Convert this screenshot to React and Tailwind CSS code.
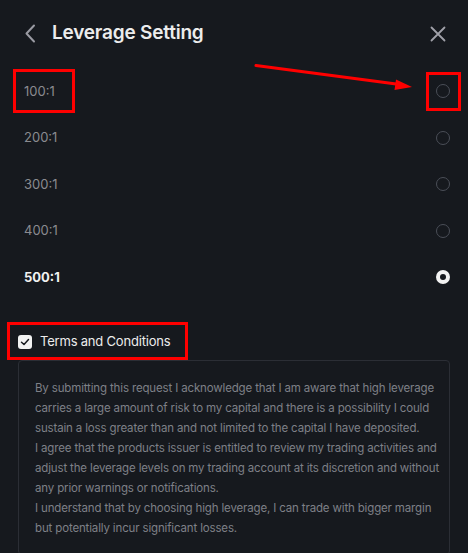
import React, { useState } from "react";

const options = ["100:1", "200:1", "300:1", "400:1", "500:1"];

function Radio({ checked }) {
  if (checked) {
    return (
      <span className="flex h-[14px] w-[14px] items-center justify-center rounded-full bg-[#f2f2f2]">
        <span className="h-[6px] w-[6px] rounded-full bg-[#16191e]"></span>
      </span>
    );
  }
  return <span className="block h-[14px] w-[14px] rounded-full border border-[#4a4e57]"></span>;
}

export default function App() {
  const [selected, setSelected] = useState("500:1");
  const [agreed, setAgreed] = useState(true);

  return (
    <div className="relative h-[553px] w-[468px] overflow-hidden bg-[#16191e] font-['Inter','Noto_Sans',sans-serif]">
      {/* Header */}
      <div className="flex h-[67px] items-center justify-between pl-[24px] pr-[22px]">
        <div className="flex items-center gap-[16px]">
          <svg width="12" height="19" viewBox="0 0 12 19" fill="none">
            <path d="M10 1.5 L2.5 9.5 L10 17.5" stroke="#9a9ba3" strokeWidth="2" strokeLinecap="round" strokeLinejoin="round" />
          </svg>
          <span className="text-[19px] font-semibold tracking-[-0.2px] text-[#ececec]">Leverage Setting</span>
        </div>
        <svg width="16" height="16" viewBox="0 0 16 16" fill="none">
          <path d="M1.5 1.5 L14.5 14.5 M14.5 1.5 L1.5 14.5" stroke="#a0a1a9" strokeWidth="1.8" strokeLinecap="round" />
        </svg>
      </div>

      {/* Leverage options */}
      <div className="mt-[1px] flex flex-col">
        {options.map((opt) => (
          <div
            key={opt}
            onClick={() => setSelected(opt)}
            className="flex h-[46.5px] cursor-pointer items-center justify-between pl-[24px] pr-[18px]"
          >
            <span
              className={
                selected === opt
                  ? "text-[13px] font-bold text-[#f0f0f0]"
                  : "text-[13px] text-[#8a8b90]"
              }
            >
              {opt}
            </span>
            <Radio checked={selected === opt} />
          </div>
        ))}
      </div>

      {/* Terms */}
      <div className="mt-[33px] flex h-[17px] items-center gap-[8px] pl-[18px]" onClick={() => setAgreed(!agreed)}>
        <span className="flex h-[14px] w-[14px] items-center justify-center rounded-[3px] bg-[#f2f2f2]">
          {agreed && (
            <svg width="10" height="10" viewBox="0 0 10 10" fill="none">
              <path d="M1.5 5.2 L4 7.5 L8.5 2.5" stroke="#16191e" strokeWidth="1.5" strokeLinecap="round" strokeLinejoin="round" />
            </svg>
          )}
        </span>
        <span className="text-[13px] tracking-[-0.2px] text-[#ececec]">Terms and Conditions</span>
      </div>

      <div className="mx-[18px] mt-[9px] rounded-[4px] border border-[#2b2e35] pl-[16px] pr-[8px] pt-[17px] pb-[16px] text-[11.5px] leading-[20px] tracking-[-0.15px] text-[#7e8087]">
        <p>
          By submitting this request I acknowledge that I am aware that high leverage carries a large amount of risk to my capital and there is a possibility I could sustain a loss greater than and not limited to the capital I have deposited.
        </p>
        <p>
          I agree that the products issuer is entitled to review my trading activities and adjust the leverage levels on my trading account at its discretion and without any prior warnings or notifications.
        </p>
        <p>
          I understand that by choosing high leverage, I can trade with bigger margin but potentially incur significant losses.
        </p>
      </div>

      {/* Annotation overlays */}
      <div className="pointer-events-none absolute left-[13px] top-[69px] h-[44px] w-[62px] border-[3px] border-[#ff0000]"></div>
      <div className="pointer-events-none absolute left-[426px] top-[72px] h-[39px] w-[35px] border-[3px] border-[#ff0000]"></div>
      <div className="pointer-events-none absolute left-[7px] top-[322px] h-[38px] w-[181px] border-[3px] border-[#ff0000]"></div>
      <svg className="pointer-events-none absolute left-0 top-0" width="468" height="553">
        <line x1="256" y1="65.5" x2="400" y2="84.5" stroke="#ff0000" strokeWidth="3" strokeLinecap="round" />
        <polygon points="412,87 396,79.5 394.5,90" fill="#ff0000" />
      </svg>
    </div>
  );
}
